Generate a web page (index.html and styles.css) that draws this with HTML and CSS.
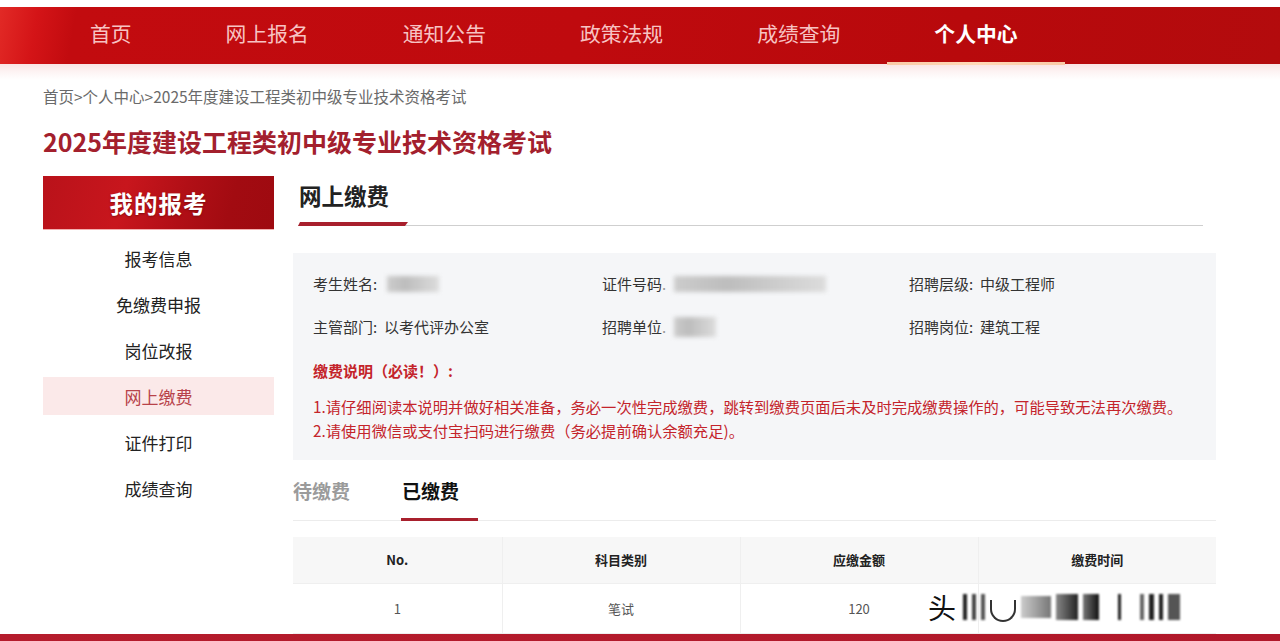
FILE: index.html
```html
<!DOCTYPE html>
<html lang="zh-CN">
<head>
<meta charset="utf-8">
<title>网上缴费</title>
<link rel="stylesheet" href="styles.css">
</head>
<body>
<div class="topstrip"></div>
<header class="nav">
  <nav class="nav-inner">
    <a class="nav-item">首页</a>
    <a class="nav-item">网上报名</a>
    <a class="nav-item">通知公告</a>
    <a class="nav-item">政策法规</a>
    <a class="nav-item">成绩查询</a>
    <a class="nav-item active">个人中心</a>
  </nav>
</header>
<div class="nav-shadow"></div>
<main class="container">
  <div class="crumb">首页&gt;个人中心&gt;2025年度建设工程类初中级专业技术资格考试</div>
  <h1 class="title">2025年度建设工程类初中级专业技术资格考试</h1>
  <div class="layout">
    <aside class="side">
      <div class="side-head">我的报考</div>
      <ul class="menu">
        <li>报考信息</li>
        <li>免缴费申报</li>
        <li>岗位改报</li>
        <li class="on">网上缴费</li>
        <li>证件打印</li>
        <li>成绩查询</li>
      </ul>
    </aside>
    <section class="content">
      <div class="sec-head">
        <h2>网上缴费</h2>
        <div class="sec-line"><span class="bar"></span></div>
      </div>
      <div class="panel">
        <div class="info">
          <div class="cell">考生姓名: <span class="blur w52"></span></div>
          <div class="cell">证件号码<span class="dot">.</span> <span class="blur w150"></span></div>
          <div class="cell">招聘层级:&nbsp; 中级工程师</div>
          <div class="cell">主管部门:&nbsp; 以考代评办公室</div>
          <div class="cell">招聘单位<span class="dot">.</span> <span class="blur w40"></span></div>
          <div class="cell">招聘岗位:&nbsp; 建筑工程</div>
        </div>
        <div class="note-title">缴费说明（必读！）:</div>
        <p class="note">1.请仔细阅读本说明并做好相关准备，务必一次性完成缴费，跳转到缴费页面后未及时完成缴费操作的，可能导致无法再次缴费。</p>
        <p class="note">2.请使用微信或支付宝扫码进行缴费（务必提前确认余额充足)。</p>
      </div>
      <div class="tabs">
        <span class="tab">待缴费</span>
        <span class="tab current">已缴费</span>
      </div>
      <div class="table-wrap">
        <table class="tbl">
          <colgroup>
            <col class="c1"><col class="c2"><col class="c3"><col class="c4">
          </colgroup>
          <thead>
            <tr><th>No.</th><th>科目类别</th><th>应缴金额</th><th>缴费时间</th></tr>
          </thead>
          <tbody>
            <tr><td>1</td><td>笔试</td><td>120</td><td></td></tr>
          </tbody>
        </table>
        <div class="watermark">
          <span class="wm-t">头</span>
          <span class="wm b1"></span><span class="wm b2"></span><span class="wm b3"></span>
          <span class="wm-c"></span>
          <span class="wm b4"></span><span class="wm b5"></span><span class="wm b6"></span>
          <span class="wm b7"></span><span class="wm b8"></span><span class="wm b9"></span>
          <span class="wm b10"></span><span class="wm b11"></span>
        </div>
      </div>
    </section>
  </div>
</main>
<footer class="foot"></footer>
</body>
</html>
```

FILE: styles.css
```css
* { box-sizing: border-box; }
html, body { margin: 0; padding: 0; }
body {
  font-family: "Noto Sans CJK SC", "Noto Sans", "Liberation Sans", sans-serif;
  color: #222;
  background: #fff;
  overflow: hidden;
}
.topstrip { height: 7px; background: #fff; }
.nav {
  height: 57px;
  background: linear-gradient(100deg, #e22a26 0, #d41417 3%, #c20b0f 6%, #bf0a0e 45%, #b8090c 75%, #b30b0d 100%);
  position: relative;
}
.nav-inner {
  display: flex;
  height: 57px;
  padding-left: 43px;
}
.nav-item {
  display: flex;
  align-items: center;
  padding: 0 47px 5px;
  font-size: 20.8px;
  color: #f7c3c3;
  position: relative;
  cursor: pointer;
}
.nav-item.active {
  color: #fff;
  font-weight: 700;
}
.nav-item.active::after {
  content: "";
  position: absolute;
  left: 0; right: 0; bottom: -1px;
  height: 3px;
  background: linear-gradient(90deg, #f9c9a6, #ffd9b8 50%, #f9c9a6);
}
.nav-shadow {
  height: 16px;
  background: linear-gradient(180deg, #f9e4e4 0, #fdf4f4 50%, #fff 100%);
}
.container {
  padding: 0 43px;
}
.crumb {
  font-size: 15.5px;
  color: #6a6a6a;
  line-height: 20px;
  margin-top: 6px;
}
.title {
  margin: 18px 0 0;
  font-size: 25px;
  line-height: 34px;
  font-weight: 700;
  color: #a3202d;
}
.layout {
  display: flex;
  gap: 19px;
  margin-top: 18px;
}
.side {
  width: 231px;
  flex: none;
}
.side-head {
  height: 54px;
  display: flex;
  align-items: center;
  justify-content: center;
  color: #fff;
  font-size: 23.5px;
  font-weight: 700;
  letter-spacing: 1px;
  background: linear-gradient(105deg, #b9121a 0, #c8161d 35%, #b10f16 60%, #a20b11 80%, #9e0a10 100%);
  text-shadow: 0 1px 2px rgba(80,0,0,.5);
  border-bottom: 1px solid #f3b0b0;
}
.menu {
  list-style: none;
  margin: 9px 0 0;
  padding: 0;
  display: flex;
  flex-direction: column;
  gap: 8px;
}
.menu li {
  height: 38px;
  display: flex;
  align-items: center;
  justify-content: center;
  font-size: 17px;
  color: #222;
}
.menu li.on {
  background: #fbe9e9;
  color: #b8434a;
}
.content {
  flex: 1;
  margin-right: 21px;
  position: relative;
}
.sec-head h2 {
  margin: 0;
  padding: 1px 0 0 6px;
  font-size: 22.5px;
  line-height: 36px;
  font-weight: 700;
  color: #222;
}
.sec-line {
  margin-top: 10px;
  margin-right: 13px;
  margin-left: 5px;
  height: 3px;
  position: relative;
  border-bottom: 1px solid #cfcfcf;
}
.sec-line .bar {
  position: absolute;
  left: 0; top: -1px;
  width: 110px;
  height: 4px;
  background: #a8202d;
  clip-path: polygon(2px 0, 100% 0, calc(100% - 3px) 100%, 0 100%);
}
.panel {
  margin-top: 27px;
  background: #f5f6f8;
  padding: 19px 20px 18px;
}
.info {
  display: grid;
  grid-template-columns: 289px 307px 1fr;
  row-gap: 19px;
}
.cell {
  font-size: 15px;
  line-height: 24px;
  color: #333;
  display: flex;
  align-items: center;
  white-space: nowrap;
}
.dot { color: #999; }
.blur {
  display: inline-block;
  height: 16px;
  background: linear-gradient(90deg, #ccc 0, #bdbdbd 35%, #c9c9c9 60%, #dcdcdc 100%);
  filter: blur(2px);
  margin-left: 10px;
}
.w52 { width: 52px; }
.w150 { width: 152px; margin-left: 8px; }
.w40 { width: 42px; margin-left: 8px; height: 20px; }
.note-title {
  margin-top: 20px;
  font-size: 15px;
  line-height: 24px;
  font-weight: 700;
  color: #c4242b;
}
.note {
  margin: 0;
  font-size: 15.3px;
  line-height: 24px;
  color: #c4242b;
  white-space: nowrap;
}
.note-title + .note { margin-top: 11px; }
.tabs {
  display: flex;
  gap: 52px;
  height: 61px;
  align-items: center;
  border-bottom: 1px solid #ececec;
  padding-top: 1px;
}
.tab {
  font-size: 19px;
  font-weight: 700;
  color: #9b9b9b;
  position: relative;
  line-height: 24px;
}
.tab.current { color: #111; }
.tab.current::after {
  content: "";
  position: absolute;
  left: -1px;
  top: 39px;
  width: 77px;
  height: 3px;
  background: #a8202d;
}
.table-wrap {
  margin-top: 16px;
  position: relative;
}
.tbl {
  width: 100%;
  border-collapse: collapse;
  table-layout: fixed;
  font-size: 13px;
}
.c1 { width: 209px; }
.c2 { width: 238px; }
.c3 { width: 238px; }
.tbl th {
  height: 46px;
  background: #f7f7f7;
  font-weight: 700;
  color: #222;
  border: 1px solid #efefef;
  border-top: none;
}
.tbl td {
  height: 50px;
  text-align: center;
  color: #555;
  border: 1px solid #efefef;
}
.tbl th:first-child, .tbl td:first-child { border-left: none; }
.tbl th:last-child, .tbl td:last-child { border-right: none; }
.watermark {
  position: absolute;
  left: 635px;
  top: 50px;
  width: 320px;
  height: 40px;
  display: flex;
  align-items: center;
  gap: 5px;
}
.wm-t {
  font-size: 28px;
  color: #111;
  line-height: 1;
  margin-right: 2px;
}
.wm {
  display: inline-block;
  height: 26px;
  background: #222;
  filter: blur(1.2px);
}
.b1 { width: 4px; }
.b2 { width: 4px; background: #444; }
.b3 { width: 4px; background: #555; }
.wm-c {
  width: 26px; height: 22px;
  border: 2px solid #333;
  border-top: none;
  border-radius: 0 0 14px 14px;
  margin-top: 8px;
}
.b4 { width: 30px; background: linear-gradient(90deg, #ccc, #777); height: 22px; }
.b5 { width: 22px; background: linear-gradient(90deg, #888, #222); }
.b6 { width: 16px; background: linear-gradient(90deg, #777, #111); }
.b7 { width: 3px; margin-left: 14px; }
.b8 { width: 4px; margin-left: 14px; background: #666; }
.b9 { width: 5px; }
.b10 { width: 4px; }
.b11 { width: 12px; background: #555; }
.foot {
  height: 30px;
  margin-top: 0;
  background: linear-gradient(90deg, #b51c2c 0, #b0182a 100%);
}
```
